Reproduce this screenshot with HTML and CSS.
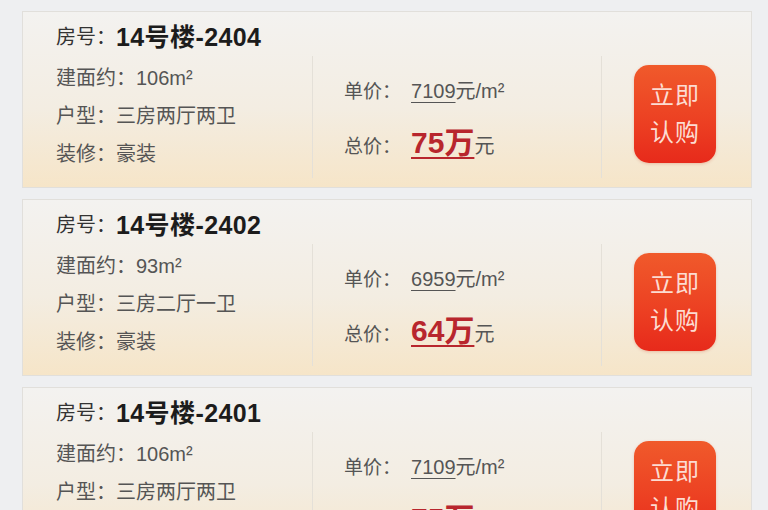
FILE: index.html
```html
<!DOCTYPE html>
<html lang="zh-CN">
<head>
<meta charset="utf-8">
<link rel="stylesheet" href="styles.css">
</head>
<body>
<div class="list">
  <div class="card">
    <div class="title"><span class="t-label">房号：</span><span class="t-no">14号楼-2404</span></div>
    <div class="info">
      <div class="col-left">
        <div class="row">建面约：106m²</div>
        <div class="row">户型：三房两厅两卫</div>
        <div class="row">装修：豪装</div>
      </div>
      <div class="col-mid">
        <div class="price-row">单价：<span class="unit"><span class="u">7109</span>元/m²</span></div>
        <div class="price-row total">总价：<span class="big">75万</span><span class="yuan">元</span></div>
      </div>
      <div class="col-right">
        <div class="btn"><span>立即</span><span>认购</span></div>
      </div>
    </div>
  </div>
  <div class="card">
    <div class="title"><span class="t-label">房号：</span><span class="t-no">14号楼-2402</span></div>
    <div class="info">
      <div class="col-left">
        <div class="row">建面约：93m²</div>
        <div class="row">户型：三房二厅一卫</div>
        <div class="row">装修：豪装</div>
      </div>
      <div class="col-mid">
        <div class="price-row">单价：<span class="unit"><span class="u">6959</span>元/m²</span></div>
        <div class="price-row total">总价：<span class="big">64万</span><span class="yuan">元</span></div>
      </div>
      <div class="col-right">
        <div class="btn"><span>立即</span><span>认购</span></div>
      </div>
    </div>
  </div>
  <div class="card">
    <div class="title"><span class="t-label">房号：</span><span class="t-no">14号楼-2401</span></div>
    <div class="info">
      <div class="col-left">
        <div class="row">建面约：106m²</div>
        <div class="row">户型：三房两厅两卫</div>
        <div class="row">装修：豪装</div>
      </div>
      <div class="col-mid">
        <div class="price-row">单价：<span class="unit"><span class="u">7109</span>元/m²</span></div>
        <div class="price-row total">总价：<span class="big">75万</span><span class="yuan">元</span></div>
      </div>
      <div class="col-right">
        <div class="btn"><span>立即</span><span>认购</span></div>
      </div>
    </div>
  </div>
</div>
</body>
</html>
```
FILE: styles.css
```css
html, body {
  margin: 0;
  padding: 0;
  background: #eeeff1;
  overflow: hidden;
  height: 510px;
}
body {
  font-family: "Liberation Sans", "Noto Sans CJK SC", sans-serif;
  color: #4e4e4e;
}
.list {
  display: flex;
  flex-direction: column;
  gap: 11px;
  padding: 11px 16px 0 22px;
}
.card {
  border: 1px solid #e1dfdb;
  background: linear-gradient(to bottom, #f3f2f0 0%, #f3ede2 55%, #f6e5c8 100%);
  padding: 10px 0 9px 33px;
  box-sizing: border-box;
  height: 177px;
  display: flex;
  flex-direction: column;
}
.title {
  height: 30px;
  line-height: 30px;
  display: flex;
  align-items: center;
  white-space: nowrap;
}
.t-label {
  font-size: 20px;
  color: #333;
}
.t-no {
  font-size: 25px;
  font-weight: 700;
  color: #1c1c1c;
  letter-spacing: 0.4px;
}
.info {
  margin-top: 4px;
  height: 122px;
  display: flex;
}
.col-left {
  width: 256px;
  padding-top: 3px;
  box-sizing: border-box;
}
.row {
  font-size: 20px;
  line-height: 38px;
  height: 38px;
  white-space: nowrap;
  color: #555;
}
.col-mid {
  width: 290px;
  border-left: 1px solid #e4e0d8;
  border-right: 1px solid #e4e0d8;
  padding-left: 31px;
  padding-top: 16px;
  box-sizing: border-box;
}
.price-row {
  font-size: 19px;
  line-height: 38px;
  height: 38px;
  color: #555;
  white-space: nowrap;
}
.price-row.total {
  margin-top: 14px;
  display: flex;
  align-items: baseline;
}
.unit {
  margin-left: 10px;
  font-size: 20px;
  color: #555;
}
.u {
  text-decoration: underline;
  text-decoration-thickness: 1px;
  text-underline-offset: 4px;
}
.big {
  font-size: 30px;
  font-weight: 700;
  color: #b8262d;
  margin-left: 10px;
  text-decoration: underline;
  text-decoration-thickness: 2px;
  text-underline-offset: 4px;
}
.yuan {
  font-size: 20px;
  color: #555;
}
.col-right {
  flex: 1;
  display: flex;
  justify-content: center;
  padding-top: 9px;
  padding-right: 3px;
}
.btn {
  width: 82px;
  height: 98px;
  border-radius: 15px;
  background: linear-gradient(to bottom, #f05a2b 0%, #ec3f22 60%, #e72a1b 100%);
  display: flex;
  flex-direction: column;
  align-items: center;
  justify-content: center;
  color: #fcdcd2;
  font-size: 24px;
  line-height: 37px;
  letter-spacing: 1px;
  box-shadow: 0 1px 3px rgba(200, 60, 30, 0.25);
}
```
